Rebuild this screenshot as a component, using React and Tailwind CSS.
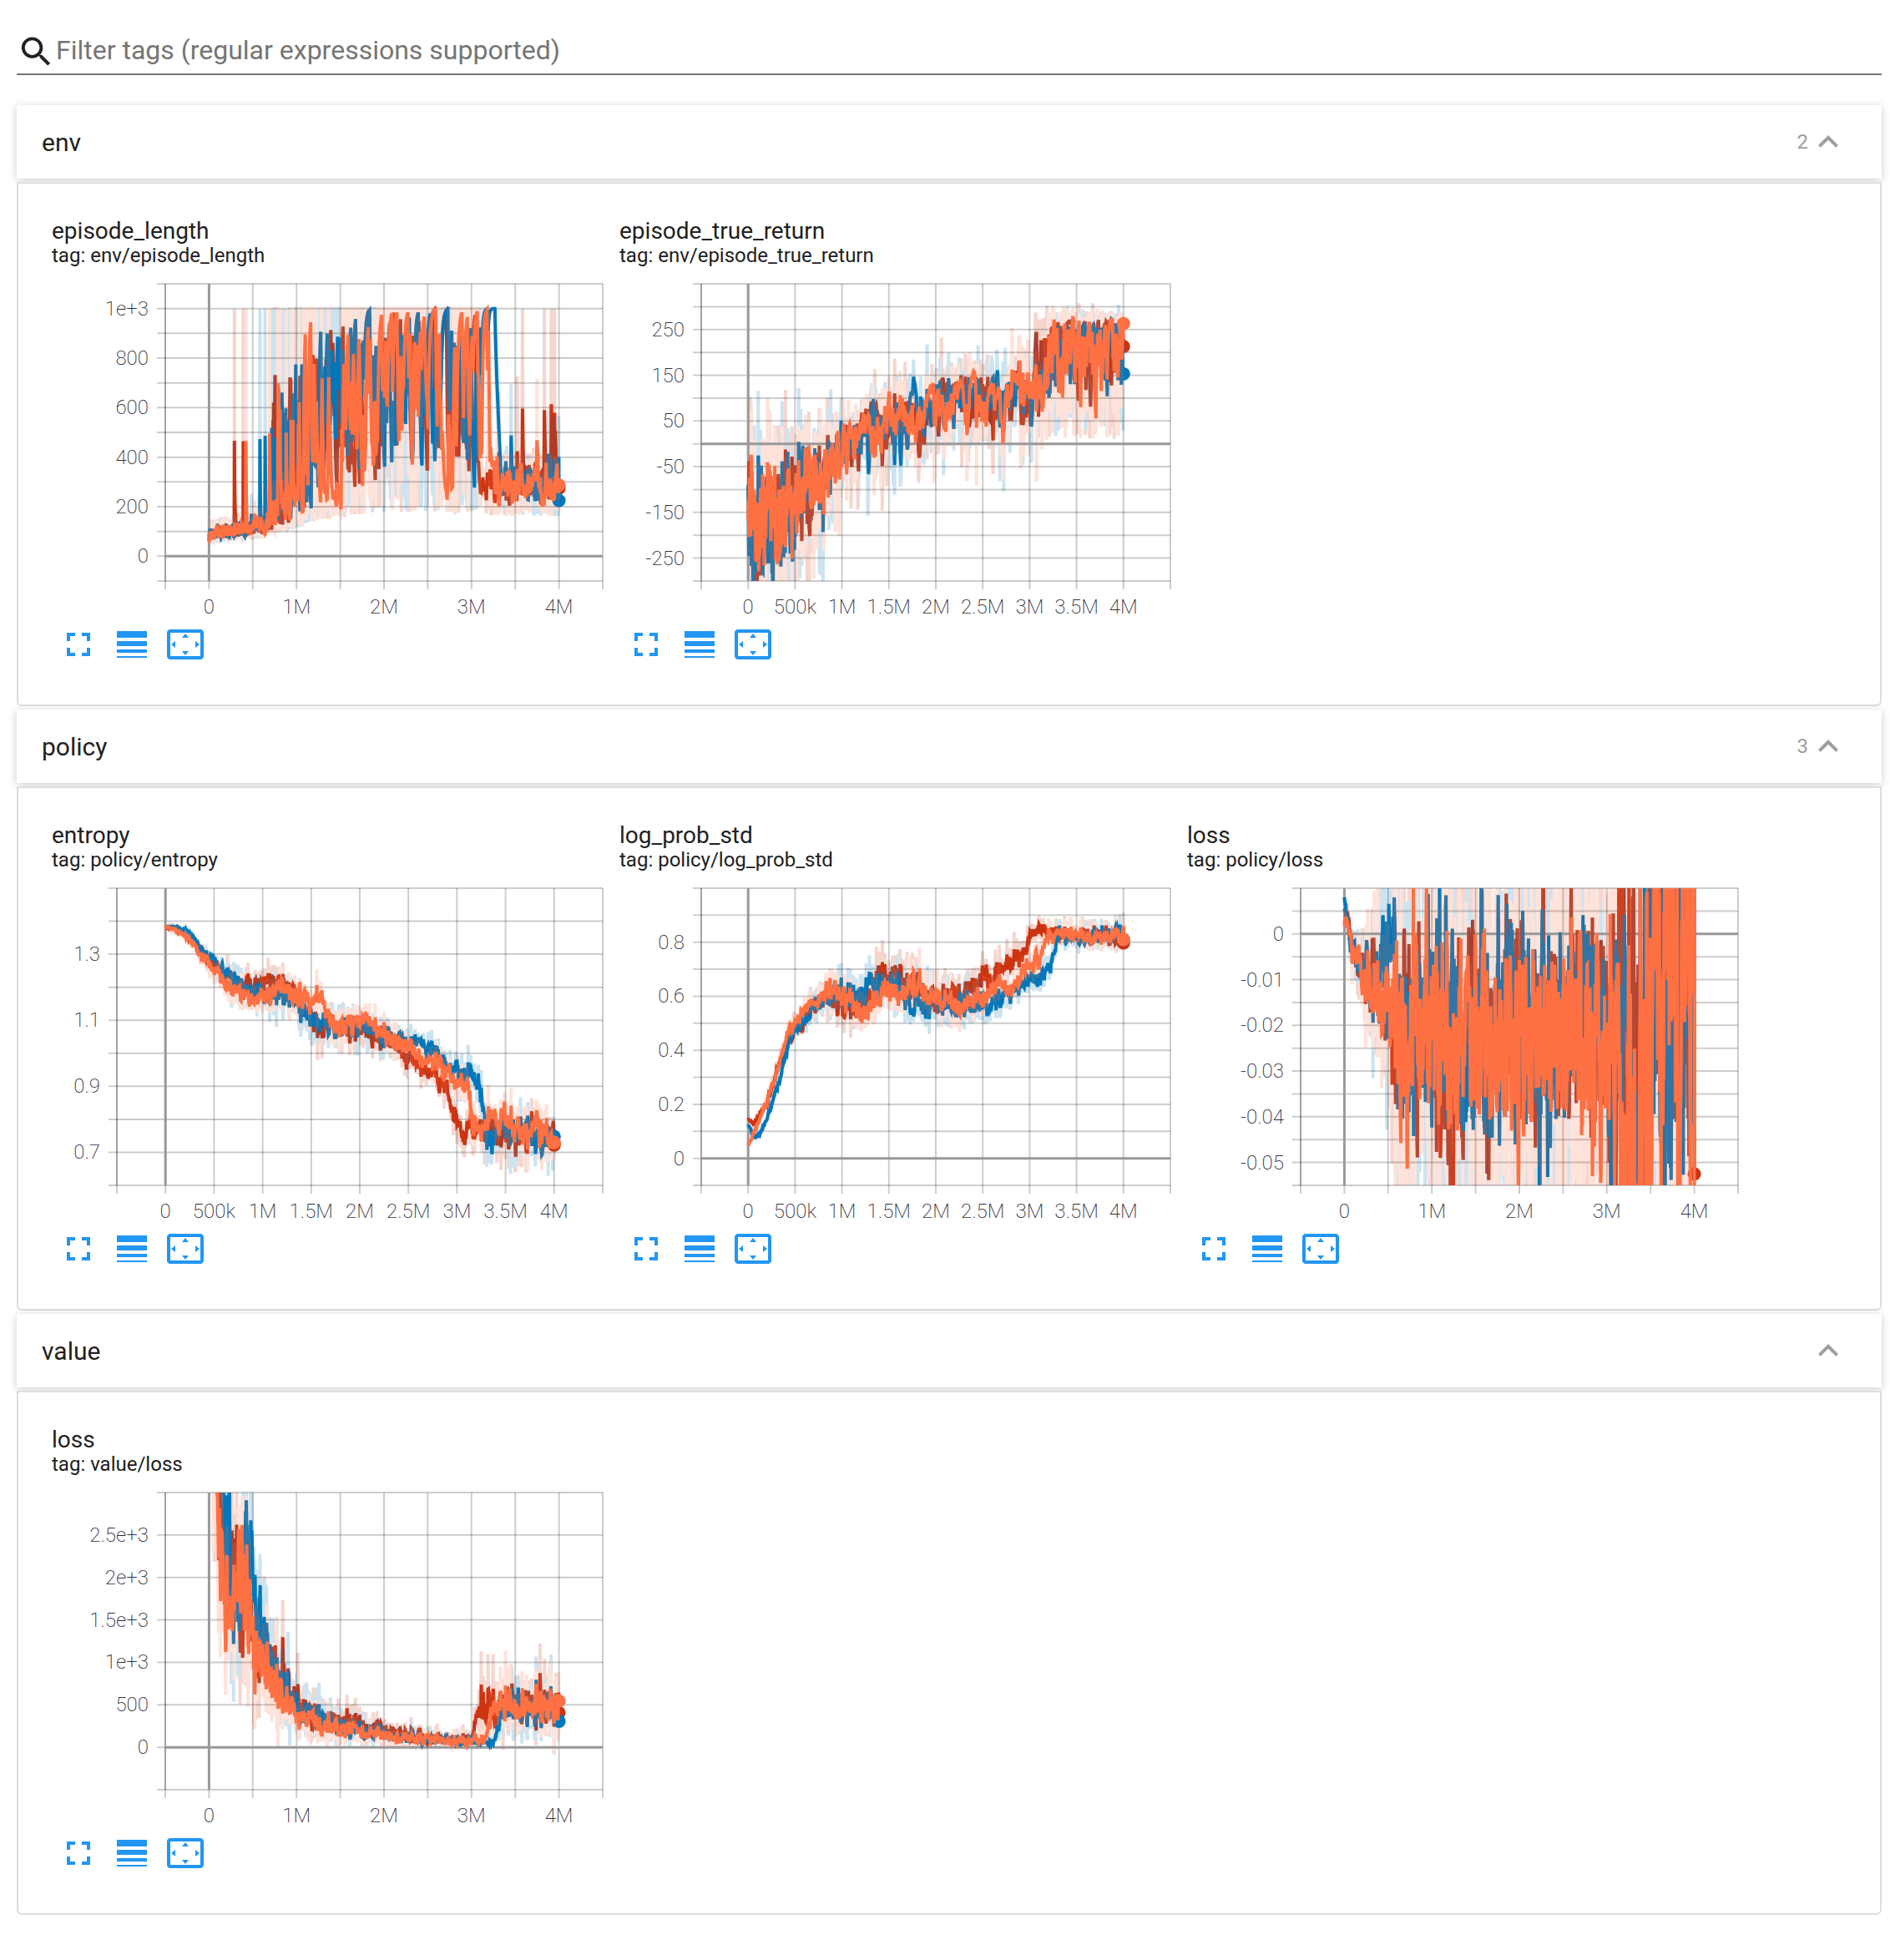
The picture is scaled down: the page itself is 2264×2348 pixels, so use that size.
import React, { useState } from "react";

const RED = "#cc3311";
const BLUE = "#0077bb";
const ORANGE = "#ff7043";
const COLORS = [RED, BLUE, ORANGE];
const PALE = ["#f5d6cf", "#cce4f1", "#ffe2d9"];

function mulberry(seed) {
  let a = seed;
  return () => {
    a = (a + 0x6d2b79f5) | 0;
    let t = Math.imul(a ^ (a >>> 15), 1 | a);
    t = (t + Math.imul(t ^ (t >>> 7), 61 | t)) ^ t;
    return ((t ^ (t >>> 14)) >>> 0) / 4294967296;
  };
}

function gauss(rng) {
  return rng() + rng() + rng() + rng() - 2;
}

// Piecewise linear interpolation over [x, y] pairs.
function at(keys, x) {
  if (x <= keys[0][0]) return keys[0][1];
  for (let i = 1; i < keys.length; i++) {
    if (x <= keys[i][0]) {
      const [x0, y0] = keys[i - 1];
      const [x1, y1] = keys[i];
      return y0 + ((y1 - y0) * (x - x0)) / (x1 - x0);
    }
  }
  return keys[keys.length - 1][1];
}

// density is the number of samples per million steps.
function build(seed, density, sample, last) {
  const rng = mulberry(seed);
  const raw = [];
  const smooth = [];
  const state = {};
  let s = 0;
  let prev = -1;
  for (let x = 0; x < 4; x += 1 / at(density, x)) {
    const v = sample(rng, x, state, prev);
    s = x === 0 ? v : s * 0.6 + v * 0.4;
    raw.push([x, v]);
    smooth.push([x, s]);
    prev = x;
  }
  smooth.push([4, last]);
  return { raw, smooth, last };
}

const ENV_DENSITY = [[0, 400], [0.7, 330], [1.1, 170], [1.3, 130], [3, 110], [3.3, 200], [4, 200]];
const RETURN_DENSITY = [[0, 380], [0.7, 280], [1.1, 140], [3, 120], [3.1, 190], [4, 170]];
const EVEN_DENSITY = [[0, 260]];

function episodeLength(k) {
  const end = [3.06, 3.27, 3.2][k];
  const spikes = [
    [0.29, 0.39, 3.58, 3.83, 3.91, 3.945],
    [0.58, 0.64],
    [0.42],
  ][k];
  const low = [[0, 92], [0.4, 112], [0.7, 130], [1, 165], [1.4, 215], [2, 240], [3.3, 235], [4, 225]];
  const p = [[1.08, 0.26], [1.15, 0.4], [1.6, 0.46], [2, 0.52], [2.4, 0.62], [3.2, 0.62]];
  return (rng, x, st, prev) => {
    const a = rng();
    const b = rng();
    if (spikes.some((q) => prev < q && x >= q)) return 1000;
    if (x < 0.68) return at(low, x) * (0.66 + 0.95 * b * b + (x > 0.35 && a > 0.9 ? 0.9 * b : 0));
    if (x > end) {
      const t = x - end;
      if (k === 1 && t < 0.07) return 800 - t * 8000;
      return a > 0.96 ? 420 + 360 * b : 160 + 260 * b;
    }
    if (k === 1 && x > 3.2) return 1000;
    if (k === 2 && x > 2.68 && x < 2.72) return 240;
    if (x < 1.08) return a < at([[0.68, 0.08], [0.85, 0.17], [1.08, 0.22]], x) ? 1000 : at(low, x) * (0.7 + 1.7 * b * b);
    const hi = at(p, x);
    if (st.hi) {
      if (a > 0.38 + hi * 0.48) st.hi = false;
    } else if (a < hi * 0.76) st.hi = true;
    return st.hi ? 1000 : at(low, x) * (0.75 + 1.9 * b * b);
  };
}

function trueReturn(k) {
  const jump = [3.06, 3.24, 3.2][k];
  const mean = [[0, -165], [0.3, -150], [0.5, -115], [0.75, -70], [1, -10], [1.25, 25], [1.5, 45], [2, 75], [2.4, 105], [4, 108]];
  const amp = [[0, 165], [0.4, 140], [0.8, 100], [1.1, 68], [2, 82], [3.2, 78]];
  return (rng, x) => {
    const g = gauss(rng);
    const b = rng();
    if (x > jump) return b > 0.25 ? 268 + g * 26 : 10 + rng() * 90;
    const skew = g < 0 ? 1.8 : 1;
    const shift = k === 1 ? 8 : 0;
    return at(mean, x) + 18 + shift + g * skew * at(amp, x);
  };
}

function drifting(keys, noise, skew) {
  return (rng, x, st) => {
    st.w = (st.w || 0) * 0.88 + gauss(rng) * 0.32;
    const g = gauss(rng);
    const n = at(noise, x);
    return at(keys, x) + n * (st.w * 0.6 + g * (g * skew > 0 ? 2.4 : 1.8));
  };
}

const ENTROPY_NOISE = [[0, 0.001], [0.3, 0.006], [0.8, 0.026], [1.8, 0.03], [2.6, 0.022], [3.2, 0.032], [4, 0.038]];
const ENTROPY = [
  [[0, 1.38], [0.1, 1.379], [0.25, 1.35], [0.4, 1.29], [0.5, 1.27], [0.7, 1.215], [0.9, 1.205], [1.15, 1.23], [1.3, 1.2], [1.45, 1.12], [1.6, 1.085], [1.8, 1.09], [2, 1.06], [2.3, 1.04], [2.5, 0.985], [2.7, 0.94], [2.9, 0.89], [3, 0.8], [3.05, 0.75], [3.2, 0.79], [3.5, 0.765], [3.8, 0.76], [4, 0.73]],
  [[0, 1.383], [0.1, 1.384], [0.25, 1.365], [0.4, 1.305], [0.55, 1.265], [0.7, 1.215], [0.9, 1.19], [1.25, 1.18], [1.4, 1.14], [1.6, 1.09], [1.8, 1.075], [2.1, 1.075], [2.4, 1.045], [2.6, 1.03], [2.8, 1], [3, 0.95], [3.15, 0.925], [3.22, 0.905], [3.28, 0.8], [3.31, 0.73], [3.36, 0.78], [3.6, 0.765], [4, 0.75]],
  [[0, 1.383], [0.1, 1.375], [0.25, 1.345], [0.4, 1.285], [0.55, 1.235], [0.68, 1.195], [0.85, 1.18], [1, 1.175], [1.2, 1.21], [1.35, 1.17], [1.6, 1.14], [1.75, 1.08], [1.95, 1.095], [2.1, 1.1], [2.35, 1.05], [2.5, 1.025], [2.65, 0.98], [2.8, 0.97], [2.95, 0.92], [3.1, 0.9], [3.18, 0.8], [3.25, 0.775], [3.35, 0.81], [3.5, 0.795], [3.7, 0.77], [3.9, 0.76], [4, 0.725]],
];

const STD_NOISE = [[0, 0.003], [0.4, 0.014], [0.7, 0.026], [1.2, 0.042], [2.2, 0.04], [3, 0.026], [3.3, 0.02], [4, 0.024]];
const STD = [
  [[0, 0.145], [0.06, 0.125], [0.2, 0.2], [0.3, 0.33], [0.4, 0.42], [0.5, 0.5], [0.55, 0.48], [0.7, 0.57], [0.85, 0.585], [1.05, 0.55], [1.25, 0.56], [1.4, 0.67], [1.6, 0.67], [1.75, 0.63], [2, 0.59], [2.25, 0.6], [2.45, 0.66], [2.65, 0.68], [2.8, 0.725], [2.92, 0.74], [3, 0.82], [3.1, 0.85], [3.25, 0.83], [4, 0.81]],
  [[0, 0.125], [0.04, 0.085], [0.1, 0.08], [0.2, 0.15], [0.3, 0.26], [0.4, 0.39], [0.5, 0.47], [0.7, 0.57], [0.9, 0.59], [1.15, 0.6], [1.4, 0.63], [1.6, 0.62], [1.8, 0.58], [2.05, 0.56], [2.4, 0.555], [2.6, 0.58], [2.8, 0.6], [3, 0.66], [3.15, 0.68], [3.22, 0.7], [3.28, 0.79], [3.32, 0.86], [3.38, 0.815], [4, 0.82]],
  [[0, 0.05], [0.1, 0.13], [0.2, 0.21], [0.3, 0.32], [0.4, 0.45], [0.5, 0.51], [0.65, 0.575], [0.85, 0.6], [1, 0.59], [1.2, 0.55], [1.4, 0.61], [1.6, 0.62], [1.8, 0.64], [2, 0.58], [2.2, 0.56], [2.5, 0.585], [2.7, 0.645], [2.8, 0.63], [2.95, 0.7], [3.1, 0.72], [3.16, 0.8], [3.25, 0.835], [3.5, 0.82], [4, 0.812]],
];

function policyLoss(k) {
  const jump = [3.02, 3.28, 3.15][k];
  const mean = [[0, 0.006 - k * 0.001], [0.1, -0.005], [0.3, -0.011], [0.5, -0.014 + (k === 1 ? 0.012 : 0)], [0.58, -0.019], [1.2, -0.023], [4, -0.019]];
  const sd = [[0, 0.003], [0.1, 0.004], [0.3, 0.012], [0.52, k === 1 ? 0.03 : 0.018], [0.6, 0.04], [3, 0.042]];
  return (rng, x) => {
    if (x === 0) return [0.005, 0.008, 0.002][k];
    const g = gauss(rng);
    if (x > jump) return x < 3.5 ? -0.036 + g * 0.09 : -0.006 + g * 0.085;
    return at(mean, x) + g * at(sd, x);
  };
}

function valueLoss(k) {
  const rise = [3.0, 3.26, 3.15][k];
  const mean = [
    [[0, 12000], [0.08, 3600], [0.15, 2100], [0.3, 2000], [0.4, 1850], [0.5, 1400], [0.7, 980], [0.9, 680], [1.1, 430], [1.4, 330], [1.8, 230], [2.3, 130], [2.8, 85], [3, 80]],
    [[0, 15000], [0.1, 4400], [0.18, 2200], [0.3, 1850], [0.4, 2050], [0.48, 2500], [0.54, 1600], [0.62, 1150], [0.8, 800], [1, 450], [1.3, 310], [1.8, 180], [2.3, 115], [2.8, 70], [3.25, 55]],
    [[0, 9000], [0.08, 3000], [0.18, 1800], [0.28, 1750], [0.38, 2100], [0.48, 1450], [0.6, 950], [0.75, 700], [0.9, 450], [1.1, 310], [1.4, 230], [1.8, 150], [2.3, 100], [2.8, 80], [3.15, 90]],
  ][k];
  return (rng, x) => {
    const g = gauss(rng);
    const b = rng();
    if (x > rise) {
      const t = Math.min(1, (x - rise) / 0.08);
      return 80 + t * (350 + g * 290 + (b > 0.9 ? 420 : 0));
    }
    const m = at(mean, x);
    return Math.max(-20, m * (1 + g * 0.5) + (x > 0.5 && b > 0.965 ? m * 0.8 : 0) + g * 64);
  };
}

const range = (from, to, step) => {
  const out = [];
  const n = Math.round((to - from) / step);
  for (let i = 0; i <= n; i++) out.push(from + i * step);
  return out;
};

const MILLIONS = [[0, "0"], [1, "1M"], [2, "2M"], [3, "3M"], [4, "4M"]];
const HALVES = [[0, "0"], [0.5, "500k"], [1, "1M"], [1.5, "1.5M"], [2, "2M"], [2.5, "2.5M"], [3, "3M"], [3.5, "3.5M"], [4, "4M"]];

const SECTIONS = [
  {
    name: "env",
    count: "2",
    charts: [
      {
        title: "episode_length",
        left: 136,
        y: [-100, 1100, 100],
        xLabels: MILLIONS,
        yLabels: [[1000, "1e+3"], [800, "800"], [600, "600"], [400, "400"], [200, "200"], [0, "0"]],
        series: [0, 1, 2].map((k) => build(11 + k, ENV_DENSITY, episodeLength(k), [275, 225, 287][k])),
      },
      {
        title: "episode_true_return",
        left: 98,
        y: [-300, 350, 50],
        xLabels: HALVES,
        yLabels: [[250, "250"], [150, "150"], [50, "50"], [-50, "-50"], [-150, "-150"], [-250, "-250"]],
        series: [0, 1, 2].map((k) => build(31 + k, RETURN_DENSITY, trueReturn(k), [213, 153, 263][k])),
      },
    ],
  },
  {
    name: "policy",
    count: "3",
    charts: [
      {
        title: "entropy",
        left: 78,
        y: [0.6, 1.5, 0.1],
        xLabels: HALVES,
        yLabels: [[1.3, "1.3"], [1.1, "1.1"], [0.9, "0.9"], [0.7, "0.7"]],
        series: [0, 1, 2].map((k) => build(51 + k, EVEN_DENSITY, drifting(ENTROPY[k], ENTROPY_NOISE, -1), [0.722, 0.748, 0.73][k])),
      },
      {
        title: "log_prob_std",
        left: 98,
        y: [-0.1, 1, 0.1],
        xLabels: HALVES,
        yLabels: [[0.8, "0.8"], [0.6, "0.6"], [0.4, "0.4"], [0.2, "0.2"], [0, "0"]],
        series: [0, 1, 2].map((k) => build(71 + k, EVEN_DENSITY, drifting(STD[k], STD_NOISE, 1), [0.797, 0.81, 0.81][k])),
      },
      {
        title: "loss",
        left: 136,
        y: [-0.055, 0.01, 0.005],
        xLabels: MILLIONS,
        yLabels: [[0, "0"], [-0.01, "-0.01"], [-0.02, "-0.02"], [-0.03, "-0.03"], [-0.04, "-0.04"], [-0.05, "-0.05"]],
        series: [0, 1, 2].map((k) => build(91 + k, EVEN_DENSITY, policyLoss(k), [-0.0525, 0.0115, -0.07][k])),
      },
    ],
  },
  {
    name: "value",
    count: "",
    charts: [
      {
        title: "loss",
        left: 136,
        y: [-500, 3000, 500],
        xLabels: MILLIONS,
        yLabels: [[2500, "2.5e+3"], [2000, "2e+3"], [1500, "1.5e+3"], [1000, "1e+3"], [500, "500"], [0, "0"]],
        series: [0, 1, 2].map((k) => build(111 + k, EVEN_DENSITY, valueLoss(k), [405, 305, 545][k])),
      },
    ],
  },
];

const TOP = 10;
const BOTTOM = 366;
const RIGHT = 660;

function Chart({ id, label, left, y, xLabels, yLabels, series }) {
  const [min, max, step] = y;
  const sx = (v) => left + ((v + 0.5) / 5) * (RIGHT - left);
  const sy = (v) => BOTTOM - ((v - min) / (max - min)) * (BOTTOM - TOP);
  const path = (pts) =>
    "M" + pts.map(([a, b]) => sx(a).toFixed(1) + "," + Math.max(-400, Math.min(900, sy(b))).toFixed(1)).join("L");
  const raws = series.map((s) => path(s.raw));
  const mains = series.map((s) => path(s.smooth));
  const xs = range(-0.5, 4.5, 0.5);
  const ys = range(min, max, step);
  return (
    <svg viewBox="0 0 660 410" role="img" aria-label={label} className="block w-full overflow-visible">
      <defs>
        <clipPath id={id}>
          <rect x={left} y={TOP} width={RIGHT - left} height={BOTTOM - TOP} />
        </clipPath>
        {[1, 2].map((k) => (
          <mask key={k} id={`${id}-under-${k}`} maskUnits="userSpaceOnUse" x="0" y="0" width="660" height="410">
            {mains.slice(0, k).map((d, i) => (
              <path key={i} d={d} fill="none" stroke="#fff" strokeWidth="4" />
            ))}
          </mask>
        ))}
      </defs>
      <g clipPath={`url(#${id})`} fill="none" strokeWidth="4">
        {raws.map((d, i) => (
          <path key={i} d={d} stroke={PALE[i]} />
        ))}
      </g>
      <g stroke="#000" strokeOpacity="0.2" strokeWidth="2">
        {xs.map((v) => (
          <line key={"x" + v} x1={sx(v)} x2={sx(v)} y1={TOP} y2={BOTTOM + 10} />
        ))}
        {ys.map((v) => (
          <line key={"y" + v} x1={left - 10} x2={RIGHT} y1={sy(v)} y2={sy(v)} />
        ))}
        <line x1={left} x2={left} y1={TOP} y2={BOTTOM} />
      </g>
      <g stroke="#999" strokeWidth="3">
        <line x1={sx(0)} x2={sx(0)} y1={TOP} y2={BOTTOM} />
        {min < 0 && <line x1={left} x2={RIGHT} y1={sy(0)} y2={sy(0)} />}
      </g>
      <g clipPath={`url(#${id})`} fill="none" strokeWidth="4">
        {mains.map((d, i) => (
          <g key={i}>
            {i > 0 && (
              <g mask={`url(#${id}-under-${i})`}>
                <path d={raws[i]} stroke={COLORS[i]} strokeOpacity="0.2" />
              </g>
            )}
            <path d={d} stroke={COLORS[i]} />
            <circle cx={sx(4)} cy={sy(series[i].last)} r="8" fill={COLORS[i]} />
          </g>
        ))}
      </g>
      <g className="font-extralight" fill="#32313f" fontSize="24">
        {xLabels.map(([v, t]) => (
          <text key={t} x={sx(v)} y="405" textAnchor="middle">{t}</text>
        ))}
        {yLabels.map(([v, t]) => (
          <text key={t} x={left - 20} y={sy(v) + 8} textAnchor="end">{t}</text>
        ))}
      </g>
    </svg>
  );
}

function Icon({ d, className }) {
  return (
    <svg viewBox="0 0 24 24" fill="currentColor" aria-hidden="true" className={className}>
      <path d={d} />
    </svg>
  );
}

const TOOLS = [
  ["Toggle full width", "M7 14H5v5h5v-2H7v-3zm-2-4h2V7h3V5H5v5zm12 7h-3v2h5v-5h-2v3zM14 5v2h3v3h2V5h-5z"],
  ["Toggle log scale", "M3 17h18v-2H3v2zm0 3h18v-1H3v1zm0-7h18v-3H3v3zm0-9v4h18V4H3z"],
  ["Fit domain to data", "M12.01 5.5L10 8h4l-1.99-2.5zM18 10v4l2.5-1.99L18 10zM6 10l-2.5 2.01L6 14v-4zm8 6h-4l2.01 2.5L14 16zm7-13H3c-1.1 0-2 .9-2 2v14c0 1.1.9 2 2 2h18c1.1 0 2-.9 2-2V5c0-1.1-.9-2-2-2zm0 16.01H3V4.99h18v14.02z"],
];

function Card({ section, chart }) {
  const tag = `${section}/${chart.title}`;
  return (
    <article className="w-[660px]">
      <h3 className="text-[28px] leading-[34px]">{chart.title}</h3>
      <p className="mb-3 text-[24px] leading-6">tag: {tag}</p>
      <Chart id={`plot-${section}-${chart.title}`} label={tag} {...chart} />
      <div className="flex text-[#2196f3]">
        {TOOLS.map(([label, d]) => (
          <button key={label} type="button" aria-label={label} className="p-2">
            <Icon d={d} className="size-12" />
          </button>
        ))}
      </div>
    </article>
  );
}

function Section({ name, count, charts }) {
  const [open, setOpen] = useState(true);
  return (
    <section className="mb-1">
      <h2>
        <button
          type="button"
          aria-expanded={open}
          onClick={() => setOpen(!open)}
          className="flex h-[88px] w-full items-center justify-between bg-white pr-10 pl-[30px] text-[30px] shadow-[0_2px_10px_rgba(0,0,0,0.2)]"
        >
          <span>{name}</span>
          <span className="flex items-center text-[24px] text-[#9e9e9e]">
            {count}
            <Icon d="M12 8l-6 6 1.41 1.41L12 10.83l4.59 4.58L18 14z" className="size-12" />
          </span>
        </button>
      </h2>
      {open && (
        <div className="mt-1 flex flex-wrap gap-5 rounded-b-md border-2 border-[#dedede] bg-white p-10">
          {charts.map((chart) => (
            <Card key={chart.title} section={name} chart={chart} />
          ))}
        </div>
      )}
    </section>
  );
}

export default function App() {
  return (
    <main className="min-h-screen bg-white pt-9 pr-[10px] pb-8 pl-5 font-[Roboto,sans-serif] text-[#212121]">
      <label className="mb-9 flex h-[54px] items-center border-b-2 border-[#757575]">
        <Icon
          d="M15.5 14h-.79l-.28-.27C15.41 12.59 16 11.11 16 9.5 16 5.91 13.09 3 9.5 3S3 5.91 3 9.5 5.91 16 9.5 16c1.61 0 3.09-.59 4.23-1.57l.27.28v.79l5 4.99L20.49 19l-4.99-5zm-6 0C7.01 14 5 11.99 5 9.5S7.01 5 9.5 5 14 7.01 14 9.5 11.99 14 9.5 14z"
          className="size-12"
        />
        <input
          type="text"
          aria-label="Filter tags"
          placeholder="Filter tags (regular expressions supported)"
          className="w-full bg-transparent pb-1 text-[32px] leading-10 outline-none placeholder:text-[#757575]"
        />
      </label>
      {SECTIONS.map((s) => (
        <Section key={s.name} {...s} />
      ))}
    </main>
  );
}
